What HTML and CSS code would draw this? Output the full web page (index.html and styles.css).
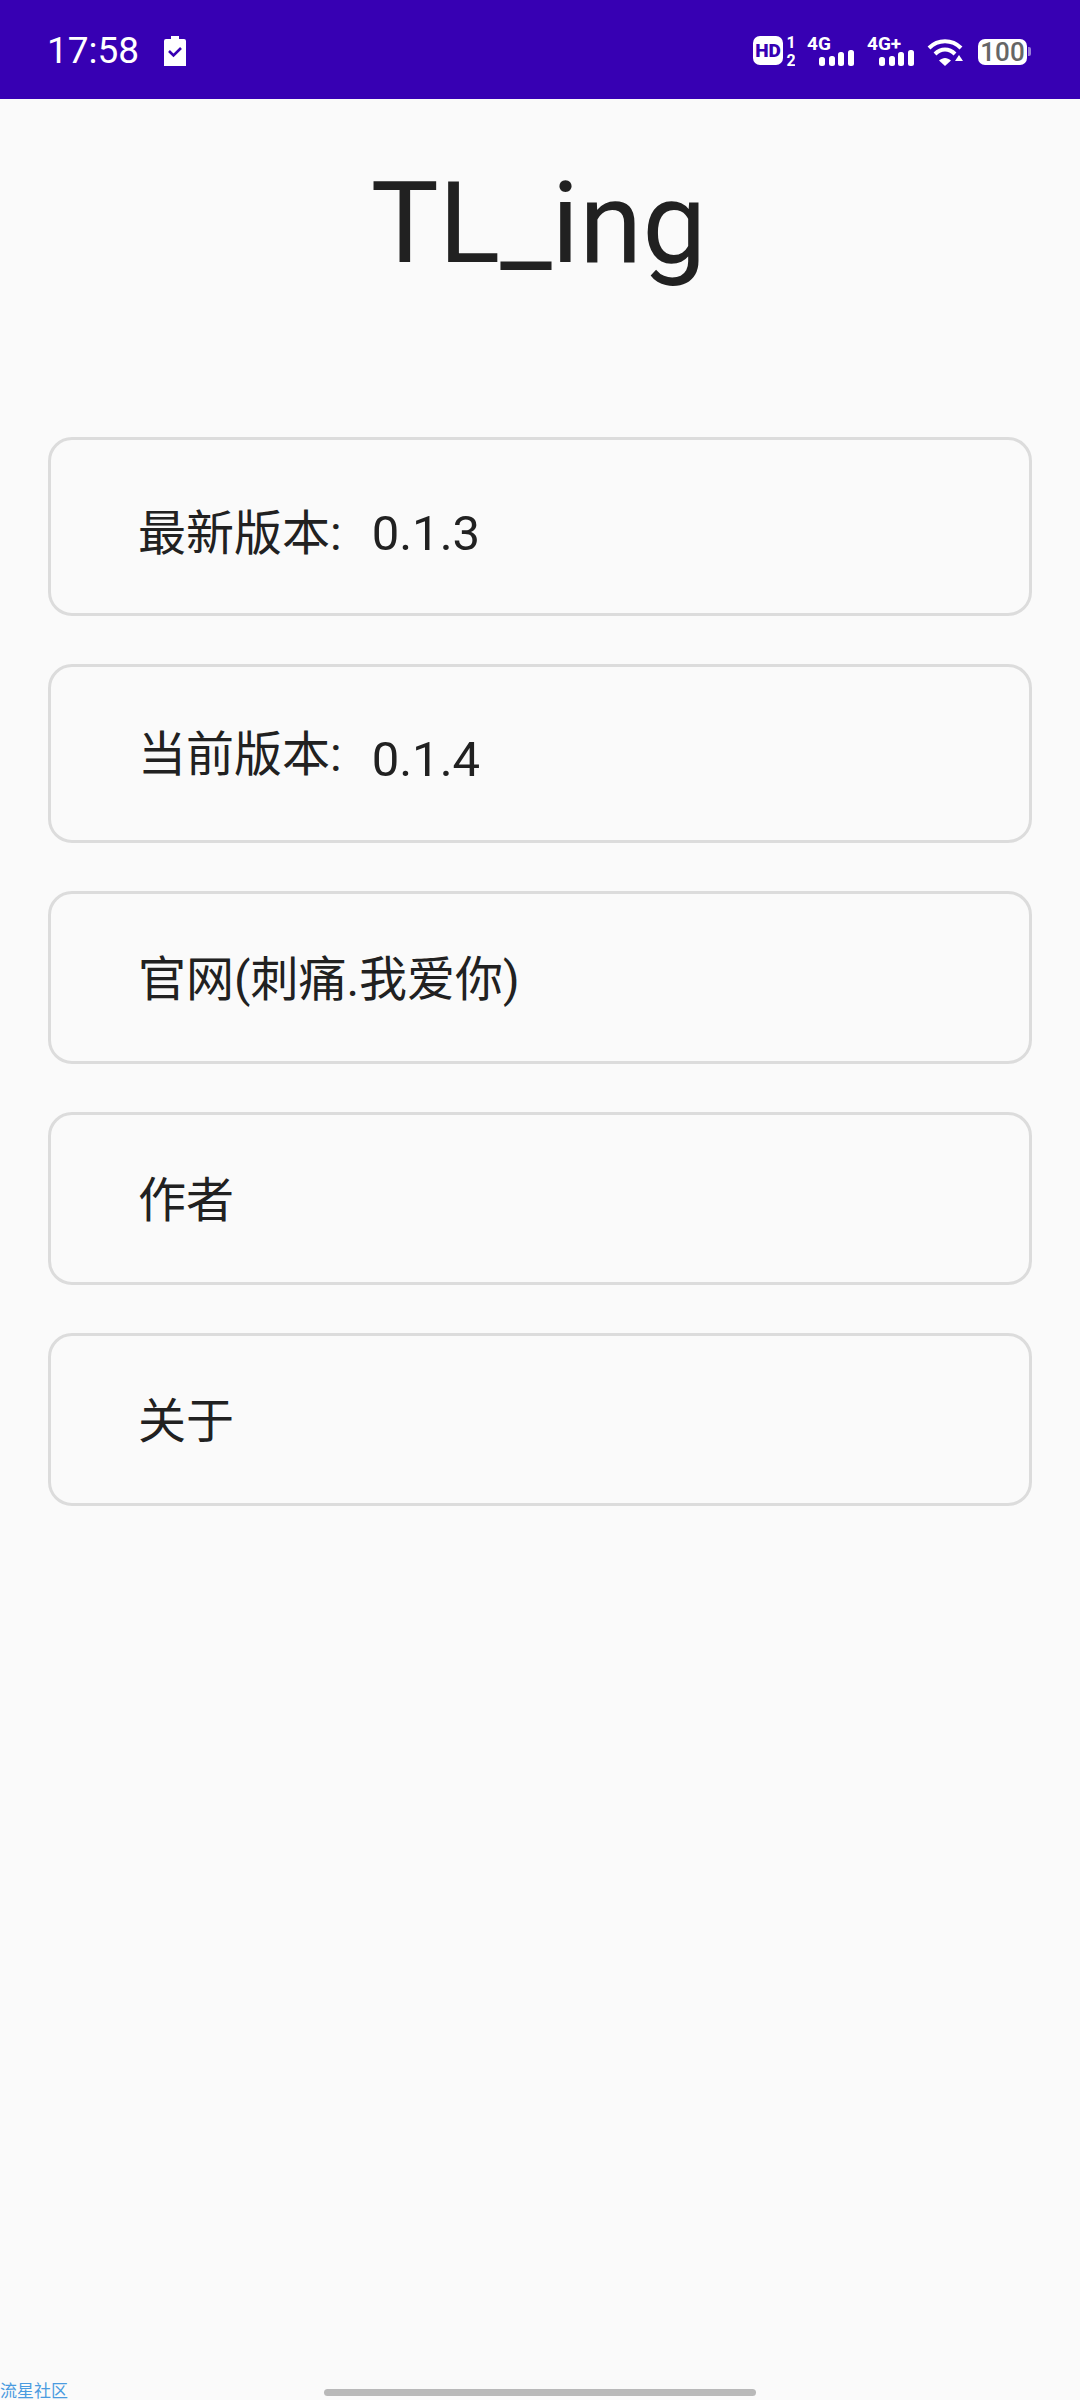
FILE: index.html
```html
<!DOCTYPE html>
<html lang="zh-CN">
<head>
  <meta charset="UTF-8">
  <title>TL_ing</title>
  <link rel="stylesheet" href="styles.css">
</head>
<body>
  <div class="page">
    <div class="statusBar">
      <div class="statusLeft">
        <span class="clock">17:58</span>
        <svg class="batteryCheck" width="22" height="30" viewBox="0 0 22 30">
          <path d="M7 0h8v3h5a2 2 0 0 1 2 2v25H0V5a2 2 0 0 1 2-2h5z" fill="#fff"/>
          <path d="M5 15l4.500 4.500L17 12" fill="none" stroke="#3700b3" stroke-width="2.600"/>
        </svg>
      </div>
      <div class="statusRight">
        <svg width="42" height="40" viewBox="0 0 42 40">
          <rect x="0" y="5" width="30" height="29" rx="7" fill="#fff"/>
          <text x="15" y="26" class="iconText hdText" text-anchor="middle">HD</text>
          <text x="38" y="17" class="iconText fracText" text-anchor="middle">1</text>
          <text x="38" y="35" class="iconText fracText" text-anchor="middle">2</text>
        </svg>
        <svg width="48" height="40" viewBox="0 0 48 40">
          <text x="0" y="19" class="iconText netText">4G</text>
          <rect x="12" y="26" width="6" height="9" rx="2.500" fill="#fff"/>
          <rect x="22" y="25" width="6" height="10" rx="2.500" fill="#fff"/>
          <rect x="31" y="21" width="6" height="14" rx="2.500" fill="#fff"/>
          <rect x="41" y="19" width="6" height="16" rx="2.500" fill="#fff"/>
        </svg>
        <svg width="48" height="40" viewBox="0 0 48 40">
          <text x="0" y="19" class="iconText netText">4G+</text>
          <rect x="12" y="26" width="6" height="9" rx="2.500" fill="#fff"/>
          <rect x="22" y="25" width="6" height="10" rx="2.500" fill="#fff"/>
          <rect x="31" y="21" width="6" height="14" rx="2.500" fill="#fff"/>
          <rect x="41" y="19" width="6" height="16" rx="2.500" fill="#fff"/>
        </svg>
        <svg width="39" height="40" viewBox="0 0 39 40">
          <path d="M2 17C11 8 25 8 34 17" fill="none" stroke="#fff" stroke-width="4"/>
          <path d="M8 23C14 17 22 17 28 23" fill="none" stroke="#fff" stroke-width="4"/>
          <path d="M12 29.500L18 35l6-5.500C20 26 16 26 12 29.500z" fill="#fff"/>
          <path d="M32 24l4 6h-8z" fill="#fff"/>
        </svg>
        <svg width="53" height="40" viewBox="0 0 53 40">
          <rect x="0" y="8" width="49" height="26" rx="7" fill="#fff"/>
          <path d="M50 16h1a2 2 0 0 1 2 2v5a2 2 0 0 1-2 2h-1z" fill="#9a80d9"/>
          <text x="24.500" y="30" class="iconText batteryText" text-anchor="middle">100</text>
        </svg>
      </div>
    </div>

    <h1 class="appTitle">TL_ing</h1>

    <div class="list">
      <div class="card cardTall latest">
        <span class="label">最新版本:</span>
        <span class="version">0.1.3</span>
      </div>
      <div class="card cardTall current">
        <span class="label">当前版本:</span>
        <span class="version">0.1.4</span>
      </div>
      <div class="card"><span class="label">官网(刺痛.我爱你)</span></div>
      <div class="card"><span class="label">作者</span></div>
      <div class="card"><span class="label">关于</span></div>
    </div>

    <div class="navHandle"></div>
    <div class="watermark">流星社区</div>
  </div>
</body>
</html>
```

FILE: styles.css
```css
html, body {
  margin: 0;
  padding: 0;
  background: #fafafa;
}

.page {
  position: relative;
  width: 1080px;
  height: 2400px;
  overflow: hidden;
  display: flex;
  flex-direction: column;
  font-family: Roboto, "Noto Sans CJK SC", sans-serif;
  color: #212121;
}

.statusBar {
  height: 99px;
  flex-shrink: 0;
  background: #3700b3;
  display: flex;
  justify-content: space-between;
  align-items: center;
  padding: 0 49px 0 47px;
  box-sizing: border-box;
}

.statusLeft {
  display: flex;
  align-items: center;
  gap: 25px;
  margin-top: 2px;
}

.clock {
  color: #fff;
  font-size: 37px;
  line-height: 44px;
}

.statusRight {
  display: flex;
  align-items: center;
  gap: 12px;
  margin-top: 3px;
}

.statusRight svg {
  display: block;
}

.iconText {
  font-family: Roboto, sans-serif;
  font-weight: 700;
  fill: #fff;
}

.hdText {
  font-size: 19px;
  font-weight: 900;
  fill: #3700b3;
}

.fracText {
  font-size: 16px;
}

.netText {
  font-size: 19px;
}

.batteryText {
  font-size: 26px;
  font-weight: 500;
  fill: #666;
}

.appTitle {
  margin: 59px 0 0;
  padding-right: 3px;
  font-size: 114px;
  font-weight: 400;
  line-height: 131px;
  text-align: center;
}

.list {
  margin-top: 148px;
  padding: 0 48px;
  display: flex;
  flex-direction: column;
  gap: 48px;
}

.card {
  height: 173px;
  box-sizing: border-box;
  border: 3px solid #dcdcdc;
  border-radius: 24px;
  background: #fafafa;
  padding: 0 0 0 87px;
  display: flex;
  align-items: center;
  font-size: 48px;
}

.cardTall {
  height: 179px;
}

.label {
  line-height: 64px;
  margin-top: 4px;
}

.version {
  margin-left: 30px;
  font-size: 49px;
  line-height: 64px;
}

.latest .label {
  margin-top: 15px;
}

.latest .version {
  margin-top: 14px;
}

.current .label {
  margin-top: 2px;
}

.current .version {
  margin-top: 13px;
}

.navHandle {
  position: absolute;
  left: 324px;
  bottom: 4px;
  width: 432px;
  height: 7px;
  border-radius: 4px;
  background: #b9b9b9;
}

.watermark {
  position: absolute;
  left: 0;
  bottom: 0;
  font-size: 17px;
  line-height: 17px;
  color: #4a9be0;
}
```
